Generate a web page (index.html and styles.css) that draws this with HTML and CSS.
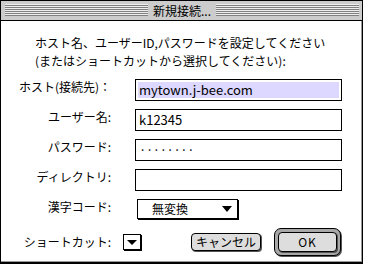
FILE: index.html
```html
<!DOCTYPE html>
<html lang="ja">
<head>
    <meta charset="UTF-8">
    <meta name="viewport" content="width=device-width, initial-scale=1.0">
    <title>新規接続</title>
    <link rel="stylesheet" href="styles.css">
</head>
<body>

<div class="dialog">
    <div class="titlebar">
        <div class="stripes"></div>
        <div class="title">新規接続...</div>
        <div class="stripes"></div>
    </div>

    <div class="content">
        <p class="intro">ホスト名、ユーザーID,パスワードを設定してください<br>(またはショートカットから選択してください):</p>

        <div class="fields">
            <label>ホスト(接続先)：</label>
            <div class="field host"><span class="selection">mytown.j-bee.com</span></div>

            <label>ユーザー名:</label>
            <div class="field">k12345</div>

            <label>パスワード:</label>
            <div class="field password">········</div>

            <label>ディレクトリ:</label>
            <div class="field"></div>

            <label>漢字コード:</label>
            <div class="popup"><span>無変換</span><span class="arrow"></span></div>
        </div>

        <div class="bottom-row">
            <label>ショートカット:</label>
            <div class="popup small"><span class="arrow"></span></div>
            <button type="button" class="btn cancel">キャンセル</button>
            <div class="default-ring">
                <button type="button" class="btn ok">OK</button>
            </div>
        </div>
    </div>
</div>

</body>
</html>
```

FILE: styles.css
```css
body {
    margin: 0;
    background: #fff;
    font-family: "Noto Sans CJK JP", "Noto Sans", sans-serif;
    font-size: 12px;
    color: #000;
}
.dialog {
    width: 363px;
    height: 264px;
    box-sizing: border-box;
    border: 1px solid #000;
    border-bottom-width: 2px;
    display: flex;
    flex-direction: column;
}
.titlebar {
    height: 19px;
    border-bottom: 1px solid #000;
    background: #cccccc;
    display: flex;
    align-items: flex-start;
    padding: 0 3px 0 4px;
}
.stripes {
    flex: 1;
    height: 12px;
    margin-top: 3px;
    background: repeating-linear-gradient(to bottom, #eeeeee 0 1px, #808080 1px 2px);
}
.title {
    padding: 0 5px;
    line-height: 19px;
    font-size: 12px;
}
.content {
    flex: 1;
    box-shadow: inset -1px -1px 0 #999;
}
.intro {
    margin: 13px 0 9px 34px;
    line-height: 18px;
}
.fields {
    display: grid;
    grid-template-columns: 110px 207px;
    grid-auto-rows: 22px;
    column-gap: 24px;
    row-gap: 8px;
}
.fields label,
.bottom-row label {
    text-align: right;
    line-height: 16px;
}
.field {
    box-sizing: border-box;
    border: 1px solid #000;
    padding: 0 3px;
    font-size: 13px;
    line-height: 20px;
}
.field.host {
    padding: 2px 2px;
}
.selection {
    display: block;
    height: 16px;
    line-height: 16px;
    padding-left: 1px;
    background: #dcd8ff;
}
.field.password {
    letter-spacing: -0.4px;
    padding-left: 3px;
}
.popup {
    box-sizing: border-box;
    width: 101px;
    height: 20px;
    margin-left: 2px;
    border: 1px solid #000;
    box-shadow: 1px 1px 0 #000;
    display: flex;
    align-items: center;
    justify-content: space-between;
    padding: 0 5px 0 14px;
    line-height: 18px;
}
.arrow {
    width: 0;
    height: 0;
    border-left: 5px solid transparent;
    border-right: 5px solid transparent;
    border-top: 6px solid #000;
}
.bottom-row {
    display: flex;
    align-items: center;
    height: 28px;
    margin-top: 7px;
}
.bottom-row label {
    width: 110px;
}
.popup.small {
    width: 18px;
    height: 16px;
    margin-left: 12px;
    padding: 0;
    justify-content: center;
}
.popup.small .arrow {
    border-left-width: 5px;
    border-right-width: 5px;
    border-top-width: 5px;
}
.btn {
    font-family: inherit;
    font-size: 12px;
    color: #000;
    background: #dddddd;
    border: 1px solid #000;
    border-radius: 4px;
    box-shadow: 1px 1px 0 #555;
    padding: 0;
    line-height: 16px;
}
.btn.cancel {
    width: 70px;
    height: 18px;
    margin-left: 50px;
}
.default-ring {
    margin-left: 13px;
    box-sizing: border-box;
    width: 67px;
    height: 28px;
    padding: 3px;
    border: 1px solid #000;
    border-radius: 7px;
    background: #a8a8a8;
    box-shadow: 1px 1px 0 #555;
}
.btn.ok {
    width: 100%;
    height: 100%;
    display: block;
    letter-spacing: 1px;
}
```
